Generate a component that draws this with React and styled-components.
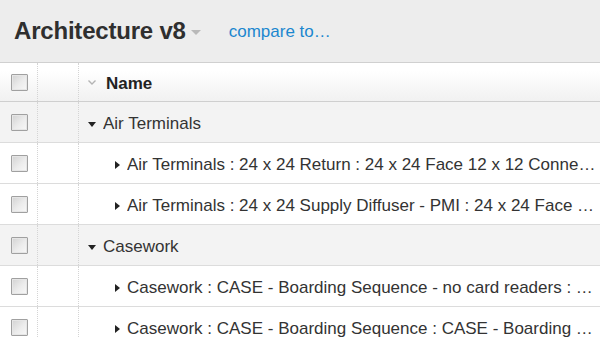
import React from "react";
import styled, { createGlobalStyle } from "styled-components";

const GlobalStyle = createGlobalStyle`
  html, body {
    margin: 0;
    padding: 0;
    background: #ffffff;
    overflow: hidden;
  }
  body {
    font-family: "Liberation Sans", Arial, Helvetica, sans-serif;
    color: #333333;
  }
`;

const rows = [
  { id: 1, group: true, label: "Air Terminals" },
  { id: 2, label: "Air Terminals : 24 x 24 Return : 24 x 24 Face 12 x 12 Connection" },
  { id: 3, label: "Air Terminals : 24 x 24 Supply Diffuser - PMI : 24 x 24 Face 12 x 12 Connection" },
  { id: 4, group: true, label: "Casework" },
  { id: 5, label: "Casework : CASE - Boarding Sequence - no card readers : CASE - Boarding" },
  { id: 6, label: "Casework : CASE - Boarding Sequence : CASE - Boarding Sequence" },
];

export default function App() {
  return (
    <Page>
      <GlobalStyle />
      <TopBar>
        <Title>Architecture v8</Title>
        <TitleCaret />
        <CompareLink href="#">compare to…</CompareLink>
      </TopBar>
      <Table>
        <HeaderRow>
          <CheckCell>
            <Checkbox />
          </CheckCell>
          <SpacerCell />
          <NameCell $indent={9}>
            <SortChevron viewBox="0 0 8 5">
              <path d="M0.5 0.5 L4 4 L7.5 0.5" fill="none" stroke="#b4b4b4" strokeWidth="1.4" />
            </SortChevron>
            <HeaderLabel>Name</HeaderLabel>
          </NameCell>
        </HeaderRow>
        {rows.map(row => (
          <Row key={row.id} $group={row.group}>
            <CheckCell>
              <Checkbox />
            </CheckCell>
            <SpacerCell />
            <NameCell $indent={row.group ? 9 : 36}>
              {row.group ? <DownCaret /> : <RightCaret />}
              <Label>{row.label}</Label>
            </NameCell>
          </Row>
        ))}
      </Table>
    </Page>
  );
}

const Page = styled.div`
  width: 600px;
  height: 337px;
  overflow: hidden;
`;

const TopBar = styled.div`
  height: 62px;
  display: flex;
  align-items: center;
  padding-left: 14px;
  background: #ededed;
  border-bottom: 1px solid #d0d0d0;
`;

const Title = styled.h1`
  margin: 0;
  font-size: 24px;
  font-weight: bold;
  color: #2f2f2f;
  letter-spacing: -0.2px;
`;

const TitleCaret = styled.span`
  width: 0;
  height: 0;
  margin-left: 5px;
  margin-top: 3px;
  border-left: 5px solid transparent;
  border-right: 5px solid transparent;
  border-top: 5px solid #b9b9b9;
`;

const CompareLink = styled.a`
  margin-left: 28px;
  margin-top: 2px;
  font-size: 17px;
  color: #1b87cf;
  text-decoration: none;
`;

const Table = styled.div`
  display: flex;
  flex-direction: column;
`;

const Row = styled.div`
  display: grid;
  grid-template-columns: 38px 41px 1fr;
  height: 40px;
  border-bottom: 1px solid #dcdcdc;
  background: ${p => (p.$group ? "#f3f3f3" : "#ffffff")};
`;

const HeaderRow = styled(Row)`
  height: 38px;
  border-bottom: 1px solid #cfcfcf;
  background: linear-gradient(#ffffff 20%, #f1f1f1 100%);
`;

const CheckCell = styled.div`
  display: flex;
  align-items: center;
  justify-content: center;
  border-right: 1px dotted #d4d4d4;
`;

const SpacerCell = styled.div`
  border-right: 1px dotted #d4d4d4;
`;

const Checkbox = styled.span`
  width: 15px;
  height: 15px;
  margin-left: 1px;
  border: 1px solid #a0a0a0;
  border-radius: 1px;
  background: linear-gradient(135deg, #d2d2d2 0%, #ececec 55%, #f8f8f8 100%);
  box-shadow: inset 0 0 0 1px #e6e6e6;
`;

const NameCell = styled.div`
  display: flex;
  align-items: center;
  min-width: 0;
  padding-top: 4px;
  padding-left: ${p => p.$indent}px;
  overflow: hidden;
`;

const SortChevron = styled.svg`
  width: 8px;
  height: 5px;
  margin-right: 10px;
  margin-top: -3px;
`;

const HeaderLabel = styled.span`
  font-size: 17px;
  font-weight: bold;
  color: #222222;
`;

const DownCaret = styled.span`
  flex: none;
  width: 0;
  height: 0;
  margin-right: 7px;
  border-left: 4px solid transparent;
  border-right: 4px solid transparent;
  border-top: 5px solid #222222;
`;

const RightCaret = styled.span`
  flex: none;
  width: 0;
  height: 0;
  margin-right: 7px;
  border-top: 4px solid transparent;
  border-bottom: 4px solid transparent;
  border-left: 5px solid #222222;
`;

const Label = styled.span`
  font-size: 17px;
  color: #333333;
  white-space: nowrap;
  overflow: hidden;
  text-overflow: ellipsis;
`;
